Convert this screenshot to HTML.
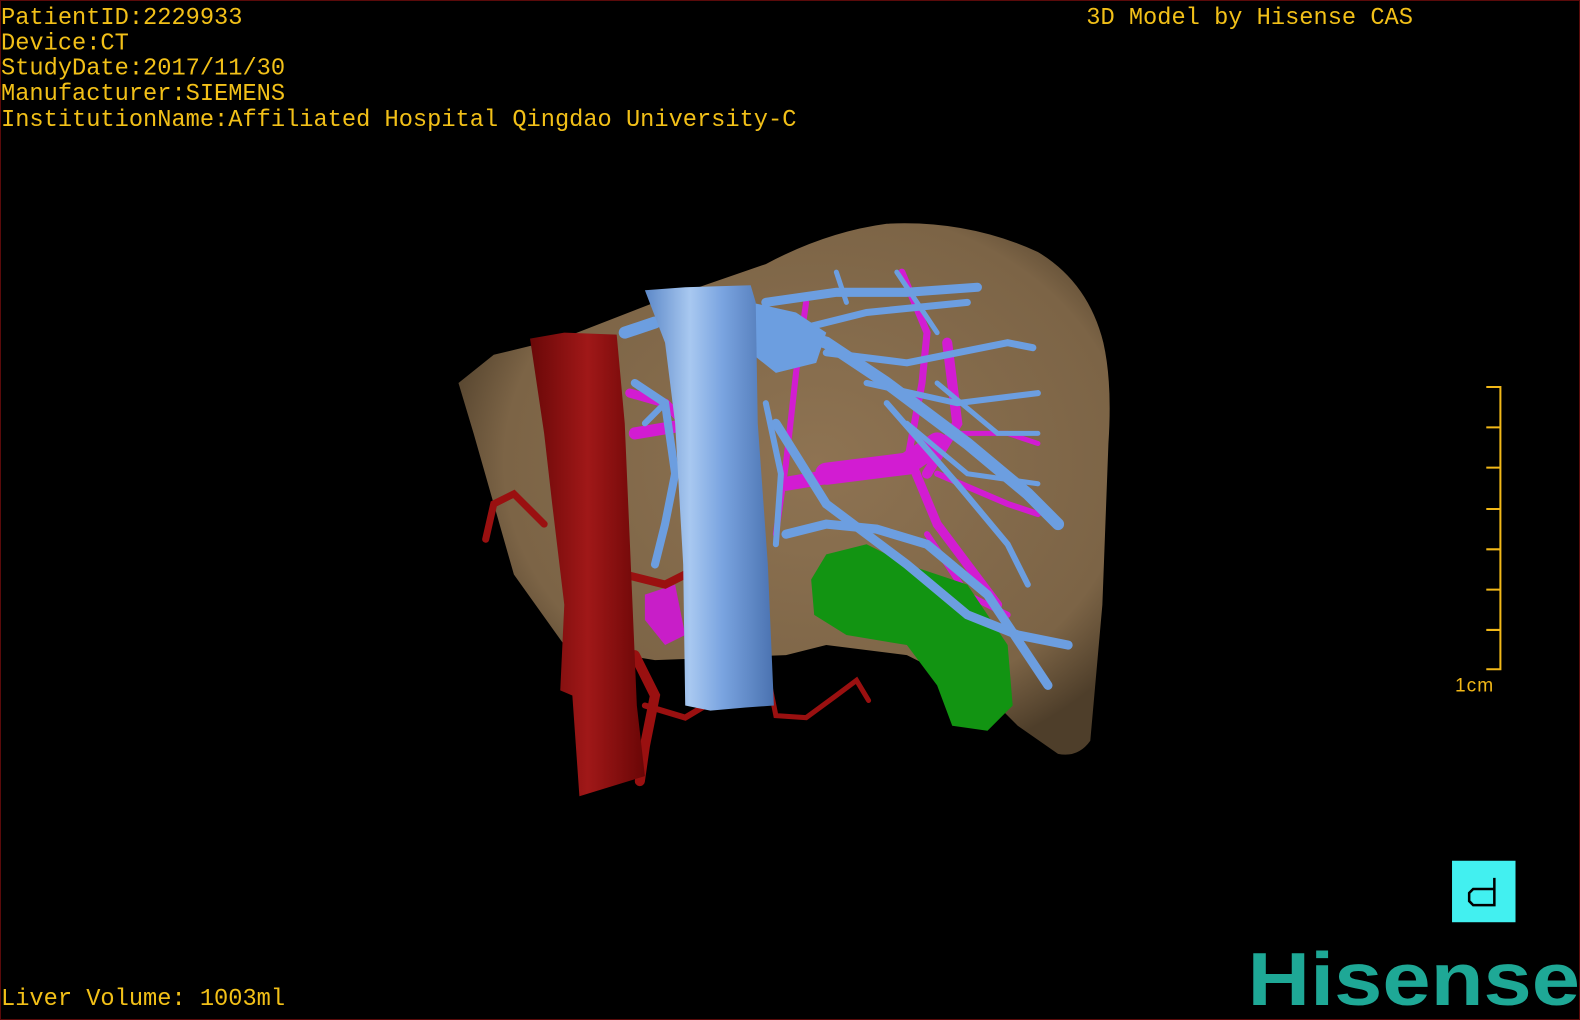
<!DOCTYPE html>
<html><head><meta charset="utf-8"><style>
html,body{margin:0;padding:0;background:#000;width:1580px;height:1020px;overflow:hidden}
svg{display:block}
</style></head><body>
<svg width="1580" height="1020" viewBox="0 0 1568 1012" preserveAspectRatio="none" xmlns="http://www.w3.org/2000/svg">
<defs>
<linearGradient id="tube" x1="0" x2="1" y1="0" y2="0">
<stop offset="0" stop-color="#5c88c8"/><stop offset="0.35" stop-color="#a8c8f0"/><stop offset="0.6" stop-color="#7aa4e0"/><stop offset="1" stop-color="#4a72b0"/></linearGradient>
<linearGradient id="red" x1="0" x2="1"><stop offset="0" stop-color="#6a0808"/><stop offset="0.5" stop-color="#a01818"/><stop offset="1" stop-color="#6a0606"/></linearGradient>
<radialGradient id="liver" cx="0.55" cy="0.45" r="0.6"><stop offset="0" stop-color="#8e7352"/><stop offset="0.8" stop-color="#7c6446"/><stop offset="1" stop-color="#4e3e2a"/></radialGradient>
</defs>
<rect x="0" y="0" width="1568" height="1012" fill="#000" stroke="#5a0a0a" stroke-width="2"/>
<g font-family="Liberation Mono, monospace" font-size="23.5" fill="#f2c018">
<text x="1" y="24">PatientID:2229933</text>
<text x="1" y="49">Device:CT</text>
<text x="1" y="74">StudyDate:2017/11/30</text>
<text x="1" y="99">Manufacturer:SIEMENS</text>
<text x="1" y="125">InstitutionName:Affiliated Hospital Qingdao University-C</text>
<text x="1078" y="24">3D Model by Hisense CAS</text>
<text x="1" y="997">Liver Volume: 1003ml</text>
</g>
<!-- liver -->
<path d="M455 380 L490 352 L560 335 L650 300 L760 262 Q820 230 880 222 Q960 218 1030 250 Q1080 280 1095 340 Q1104 380 1100 440 L1094 600 L1082 735 Q1070 752 1050 748 L1010 720 L980 690 L900 650 L820 640 L780 650 L650 655 L560 640 L510 570 L490 500 L470 430 Z" fill="url(#liver)"/>
<!-- magenta vessels -->
<g stroke="#d21cd2" fill="none" stroke-linecap="round">
<path d="M820 470 L900 460 L930 440" stroke-width="22"/>
<path d="M780 480 L840 470" stroke-width="14"/>
<path d="M905 460 L930 520 L960 560 L990 600" stroke-width="9"/>
<path d="M940 340 L950 420 L920 470" stroke-width="10"/>
<path d="M895 270 L920 330 L915 380 L900 460" stroke-width="7"/>
<path d="M630 430 L690 420" stroke-width="12"/>
<path d="M625 390 L660 400 L680 420" stroke-width="9"/>
<path d="M800 300 L790 370 L780 460 L770 530" stroke-width="6"/>
<path d="M930 470 L1000 500 L1030 510" stroke-width="6"/>
<path d="M920 530 L960 590 L1000 610" stroke-width="6"/>
<path d="M940 430 L1000 430 L1030 440" stroke-width="5"/>
</g>
<path d="M640 590 L670 580 L680 630 L660 640 L640 615 Z" fill="#c81ec8"/>
<!-- green -->
<path d="M820 550 L860 540 L900 560 L960 580 L1000 640 L1005 700 L980 725 L945 720 L930 680 L900 640 L840 630 L808 610 L805 575 Z" fill="#129412"/>
<!-- blue branches -->
<g stroke="#6c9ee0" fill="none" stroke-linecap="round">
<path d="M750 320 L820 340 L880 380 L960 440 L1020 490 L1050 520" stroke-width="12"/>
<path d="M760 300 L830 290 L900 290 L970 285" stroke-width="9"/>
<path d="M780 330 L860 310 L960 300" stroke-width="7"/>
<path d="M820 350 L900 360 L1000 340 L1025 345" stroke-width="7"/>
<path d="M860 380 L950 400 L1030 390" stroke-width="6"/>
<path d="M880 400 L950 480 L1000 540 L1020 580" stroke-width="6"/>
<path d="M770 420 L820 500 L900 560 L960 610 L1010 630 L1060 640" stroke-width="9"/>
<path d="M780 530 L820 520 L870 525 L920 540 L980 590 L1040 680" stroke-width="9"/>
<path d="M900 420 L960 470 L1030 480" stroke-width="5"/>
<path d="M930 380 L990 430 L1030 430" stroke-width="5"/>
<path d="M620 330 L650 320" stroke-width="12"/>
<path d="M630 380 L660 400 L670 470 L660 520 L650 560" stroke-width="8"/>
<path d="M660 400 L640 420" stroke-width="6"/>
<path d="M760 400 L775 470 L770 540" stroke-width="6"/>
<path d="M890 270 L910 300 L930 330" stroke-width="5"/>
<path d="M830 270 L840 300" stroke-width="5"/>
</g>
<path d="M745 300 L790 310 L820 330 L810 360 L770 370 L745 350 Z" fill="#6c9ee0"/>
<!-- red branches -->
<g stroke="#9a1010" fill="none" stroke-linecap="round">
<path d="M540 520 L510 490 L490 500 L482 535" stroke-width="7"/>
<path d="M620 570 L660 580 L680 570" stroke-width="8"/>
<path d="M630 650 L650 690 L640 740 L635 775" stroke-width="10"/>
<path d="M640 700 L680 712 L700 700" stroke-width="6"/>
<path d="M760 660 L770 710 L800 712 L830 690 L850 675 L862 695" stroke-width="5"/>
</g>
<!-- red vessel -->
<path d="M526 336 L560 330 L612 332 L620 420 L626 560 L632 700 L640 770 L575 790 L568 690 L556 685 L560 600 L548 500 L540 430 Z" fill="url(#red)"/>
<!-- blue tube -->
<path d="M640 288 L680 285 L745 283 L750 300 L752 420 L762 560 L768 700 L740 702 L705 705 L680 700 L678 560 L670 420 L660 340 Z" fill="url(#tube)"/>
<!-- scale -->
<g stroke="#f2b818" stroke-width="2" fill="none">
<path d="M1475 384 H1489 V664 H1475"/>
<path d="M1475 424 H1489 M1475 464 H1489 M1475 505 H1489 M1475 545 H1489 M1475 585 H1489 M1475 625 H1489"/>
</g>
<text x="1444" y="686" font-family="Liberation Sans, sans-serif" font-size="19" fill="#f2b818" letter-spacing="1">1cm</text>
<rect x="1441" y="854" width="63" height="61" fill="#42f0f0"/>
<path d="M1483 871 V898 H1462 L1458 894 V886 L1462 882 H1483" fill="none" stroke="#000" stroke-width="2.5"/>
<text x="1238" y="997" font-family="Liberation Sans, sans-serif" font-weight="bold" font-size="75" fill="#1ea896" textLength="330" lengthAdjust="spacingAndGlyphs">Hisense</text>
</svg>
</body></html>
